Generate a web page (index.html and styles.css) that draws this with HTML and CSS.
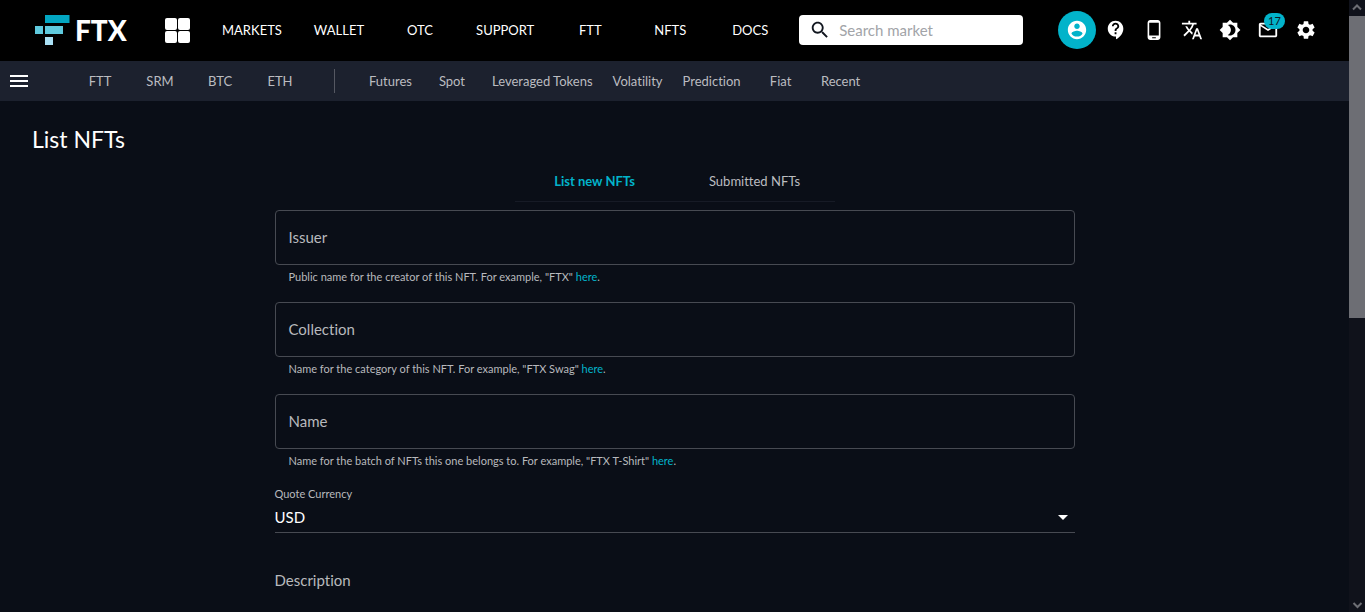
FILE: index.html
```html
<!DOCTYPE html>
<html lang="en">
<head>
<meta charset="utf-8">
<meta name="viewport" content="width=device-width, initial-scale=1">
<title>List NFTs</title>
<link rel="stylesheet" href="styles.css">
</head>
<body>
<div class="page">
  <header class="topbar">
    <a class="logo" href="#" aria-label="FTX">
      <svg class="logo-mark" width="35" height="30" viewBox="0 0 35 30" aria-hidden="true">
        <path fill="#02a6c2" d="M10 0h24.500v8H10z"/>
        <path fill="#5fcade" d="M0 11h8v8H0zM10 11h18v8H10z"/>
        <path fill="#aae1f5" d="M10 22h8v8h-8z"/>
      </svg>
      <span class="logo-text">FTX</span>
    </a>
    <button class="apps" type="button" aria-label="Apps">
      <svg width="26" height="26" viewBox="0 0 26 26" aria-hidden="true" fill="#fff">
        <rect x="0" y="1" width="12" height="12" rx="2"/><rect x="13" y="1" width="12" height="12" rx="2"/>
        <rect x="0" y="14" width="12" height="12" rx="2"/><rect x="13" y="14" width="12" height="12" rx="2"/>
      </svg>
    </button>
    <nav class="main-nav" aria-label="Main">
      <a href="#">MARKETS</a><a href="#">WALLET</a><a href="#">OTC</a><a href="#">SUPPORT</a><a href="#">FTT</a><a href="#">NFTS</a><a href="#">DOCS</a>
    </nav>
    <label class="search">
      <svg width="22" height="22" viewBox="0 0 24 24" aria-hidden="true" fill="#11161f"><path d="M15.5 14h-.79l-.28-.27C15.41 12.59 16 11.11 16 9.5 16 5.91 13.09 3 9.5 3S3 5.91 3 9.5 5.91 16 9.5 16c1.61 0 3.09-.59 4.23-1.57l.27.28v.79l5 4.99L20.49 19l-4.99-5zm-6 0C7.01 14 5 11.99 5 9.5S7.01 5 9.5 5 14 7.01 14 9.5 11.99 14 9.5 14z"/></svg>
      <input type="search" placeholder="Search market" aria-label="Search market">
    </label>
    <div class="tools">
      <button class="tool account" type="button" aria-label="Account"><svg viewBox="0 0 24 24"><path d="M12 2C6.48 2 2 6.48 2 12s4.480 10 10 10 10-4.480 10-10S17.520 2 12 2zm0 3c1.660 0 3 1.340 3 3s-1.340 3-3 3-3-1.340-3-3 1.340-3 3-3zm0 14.200c-2.500 0-4.710-1.280-6-3.220.03-1.990 4-3.080 6-3.080 1.990 0 5.970 1.090 6 3.080-1.290 1.940-3.500 3.220-6 3.220z"/></svg></button>
      <button class="tool" type="button" aria-label="Help"><svg viewBox="0 0 24 24"><path d="M11.500 2C6.810 2 3 5.810 3 10.500S6.810 19 11.500 19h.5v3c4.860-2.340 8-7 8-11.500C20 5.810 16.190 2 11.500 2zm1 14.500h-2v-2h2v2zm0-3.500h-2c0-3.250 3-3 3-5 0-1.100-.9-2-2-2s-2 .9-2 2h-2c0-2.210 1.790-4 4-4s4 1.790 4 4c0 2.500-3 2.750-3 5z"/></svg></button>
      <button class="tool" type="button" aria-label="Mobile app"><svg viewBox="0 0 24 24"><path d="M16 1H8C6.340 1 5 2.340 5 4v16c0 1.660 1.340 3 3 3h8c1.660 0 3-1.340 3-3V4c0-1.660-1.340-3-3-3zm-2 20h-4v-1h4v1zm3.250-3H6.750V4h10.500v14z"/></svg></button>
      <button class="tool" type="button" aria-label="Language"><svg viewBox="0 0 24 24"><path d="M12.870 15.070l-2.540-2.510.03-.03c1.740-1.940 2.980-4.170 3.710-6.530H17V4h-7V2H8v2H1v1.990h11.170C11.500 7.920 10.440 9.750 9 11.350 8.070 10.320 7.300 9.190 6.690 8h-2c.73 1.630 1.730 3.170 2.980 4.560l-5.090 5.020L4 19l5-5 3.110 3.110.76-2.040zM18.500 10h-2L12 22h2l1.120-3h4.750L21 22h2l-4.500-12zm-2.620 7l1.620-4.330L19.120 17h-3.240z"/></svg></button>
      <button class="tool" type="button" aria-label="Theme"><svg viewBox="0 0 24 24"><path d="M20 8.690V4h-4.690L12 .69 8.690 4H4v4.690L.69 12 4 15.310V20h4.690L12 23.310 15.310 20H20v-4.690L23.310 12 20 8.690zM12 18c-.89 0-1.740-.2-2.500-.55C11.560 16.500 13 14.420 13 12s-1.440-4.500-3.500-5.450C10.260 6.200 11.110 6 12 6c3.310 0 6 2.690 6 6s-2.690 6-6 6z"/></svg></button>
      <button class="tool" type="button" aria-label="17 messages"><svg viewBox="0 0 24 24"><path d="M20 4H4c-1.100 0-1.990.9-1.990 2L2 18c0 1.100.9 2 2 2h16c1.100 0 2-.9 2-2V6c0-1.100-.9-2-2-2zm0 14H4V8l8 5 8-5v10zm-8-7L4 6h16l-8 5z"/></svg><span class="badge">17</span></button>
      <button class="tool" type="button" aria-label="Settings"><svg viewBox="0 0 24 24"><path d="M19.140 12.940c.04-.3.060-.61.060-.94 0-.32-.02-.64-.07-.94l2.030-1.580c.18-.14.230-.41.120-.61l-1.920-3.320c-.12-.22-.37-.29-.59-.22l-2.390.96c-.5-.38-1.030-.7-1.620-.94l-.36-2.540c-.04-.24-.24-.41-.48-.41h-3.840c-.24 0-.43.17-.47.41l-.36 2.540c-.59.24-1.130.57-1.620.94l-2.390-.96c-.22-.08-.47 0-.59.22L2.740 8.870c-.12.21-.08.470.12.610l2.030 1.580c-.05.3-.09.630-.09.940s.02.640.07.940l-2.030 1.580c-.18.140-.23.410-.12.610l1.920 3.320c.12.220.37.290.59.220l2.390-.96c.5.380 1.030.7 1.620.94l.36 2.540c.05.240.24.410.48.410h3.840c.24 0 .44-.17.47-.41l.36-2.540c.59-.24 1.130-.56 1.620-.94l2.390.96c.22.080.47 0 .59-.22l1.920-3.320c.12-.22.070-.47-.12-.61l-2.010-1.580zM12 15.600c-1.980 0-3.600-1.620-3.600-3.600s1.620-3.600 3.600-3.600 3.600 1.620 3.600 3.600-1.620 3.600-3.600 3.600z"/></svg></button>
    </div>
  </header>

  <div class="subbar">
    <button class="menu" type="button" aria-label="Menu">
      <svg width="18" height="12" viewBox="0 0 18 12" aria-hidden="true"><path fill="#fff" d="M0 0h18v2H0zM0 5h18v2H0zM0 10h18v2H0z"/></svg>
    </button>
    <nav class="sub-nav" aria-label="Favourites"><a href="#">FTT</a><a href="#">SRM</a><a href="#">BTC</a><a href="#">ETH</a></nav>
    <span class="divider"></span>
    <nav class="sub-nav" aria-label="Market types"><a href="#">Futures</a><a href="#">Spot</a><a href="#">Leveraged Tokens</a><a href="#">Volatility</a><a href="#">Prediction</a><a href="#">Fiat</a><a href="#">Recent</a></nav>
  </div>

  <main class="content">
    <h1>List NFTs</h1>
    <div class="tabs" role="tablist">
      <button class="tab active" type="button" role="tab" aria-selected="true">List new NFTs</button>
      <button class="tab" type="button" role="tab" aria-selected="false">Submitted NFTs</button>
    </div>
    <form class="form">
      <div class="field">
        <div class="box"><label for="issuer">Issuer</label><input id="issuer" type="text"></div>
        <p class="help">Public name for the creator of this NFT. For example, "FTX" <a href="#">here</a>.</p>
      </div>
      <div class="field">
        <div class="box"><label for="collection">Collection</label><input id="collection" type="text"></div>
        <p class="help">Name for the category of this NFT. For example, "FTX Swag" <a href="#">here</a>.</p>
      </div>
      <div class="field">
        <div class="box"><label for="name">Name</label><input id="name" type="text"></div>
        <p class="help">Name for the batch of NFTs this one belongs to. For example, "FTX T-Shirt" <a href="#">here</a>.</p>
      </div>
      <div class="currency">
        <label for="currency">Quote Currency</label>
        <div class="select">
          <select id="currency"><option>USD</option></select>
          <svg width="24" height="24" viewBox="0 0 24 24" aria-hidden="true"><path fill="#fff" d="M7 10l5 5 5-5z"/></svg>
        </div>
      </div>
      <div class="description">
        <label for="description">Description</label>
        <textarea id="description" rows="3"></textarea>
      </div>
    </form>
  </main>
</div>
<div class="scrollbar" aria-hidden="true">
  <svg width="16" height="16" viewBox="0 0 16 16"><path fill="none" stroke="#6d6e74" stroke-width="2" d="M4 9.500l4-4 4 4"/></svg>
  <span class="thumb"></span>
  <svg width="16" height="16" viewBox="0 0 16 16"><path fill="none" stroke="#6d6e74" stroke-width="2" d="M4.500 7l4 4 4-4"/></svg>
</div>
</body>
</html>
```

FILE: styles.css
```css
* {
  box-sizing: border-box;
}

body {
  margin: 0;
  height: 100vh;
  display: grid;
  grid-template-columns: minmax(0, 1fr) 16px;
  overflow: hidden;
  background: #0a0e17;
  color: #fff;
  font-family: Lato, "Open Sans", sans-serif;
  font-size: 13px;
  font-variant-ligatures: none;
}

a {
  color: inherit;
  text-decoration: none;
}

button,
input,
select,
textarea {
  font: inherit;
  color: inherit;
  background: none;
  border: 0;
  padding: 0;
  margin: 0;
  outline: 0;
}

svg {
  display: block;
  flex: none;
}

.page {
  height: 100vh;
  overflow: hidden;
}

.topbar {
  display: flex;
  align-items: center;
  height: 61px;
  padding: 0 24px 1px 35px;
  background: #000;
}

.logo {
  display: flex;
  align-items: center;
  gap: 5px;
  width: 130px;
}

.logo-text {
  font-size: 28px;
  font-weight: 900;
  line-height: 30px;
}

.apps {
  width: 41px;
}

.main-nav,
.sub-nav {
  display: flex;
  white-space: nowrap;
}

.main-nav a {
  min-width: 80px;
  padding: 0 16px;
  text-align: center;
}

.search {
  display: flex;
  align-items: center;
  gap: 8px;
  width: 224px;
  height: 30px;
  margin-left: 9px;
  padding: 0 10px;
  border-radius: 4px;
  background: #fff;
  color: #11161f;
  font-size: 15px;
}

.search input {
  flex: 1;
  min-width: 0;
}

.search input::placeholder {
  color: #a2a4a8;
  opacity: 1;
}

.tools {
  display: flex;
  margin-left: auto;
}

.tool {
  position: relative;
  display: grid;
  place-items: center;
  width: 38px;
  height: 38px;
  border-radius: 50%;
}

.tool svg {
  width: 22px;
  height: 22px;
  fill: #fff;
}

.account {
  margin-right: 1px;
  background: #02b3ca;
}

.badge {
  position: absolute;
  top: 2px;
  right: 2px;
  width: 21px;
  height: 16px;
  border-radius: 8px;
  background: #02b3ca;
  color: #10151f;
  font-size: 11px;
  line-height: 16px;
  text-align: center;
}

.subbar {
  display: flex;
  align-items: center;
  height: 40px;
  padding-left: 10px;
  background: #1c212e;
  color: #bbbcc0;
}

.menu {
  width: 60px;
}

.sub-nav a {
  min-width: 60px;
  padding: 0 10px;
  text-align: center;
}

.divider {
  width: 1px;
  height: 24px;
  margin: 0 24px;
  background: #555862;
}

h1 {
  margin: 0;
  padding: 22px 32px 7px;
  font-size: 23px;
  line-height: 32px;
  font-weight: 400;
}

.tabs {
  display: flex;
  width: 320px;
  margin: 0 auto 8px;
  border-bottom: 1px solid #171b26;
}

.tab {
  flex: 1;
  height: 39px;
  padding-bottom: 2px;
  color: #bbbcc0;
}

.active {
  color: #02b3ca;
  font-weight: 700;
}

.form {
  max-width: 800px;
  margin: 0 auto;
  color: #b8b9bd;
}

.field {
  margin-bottom: 16px;
}

.box {
  display: grid;
  align-items: center;
  height: 55px;
  border: 1px solid #474a52;
  border-radius: 4px;
  font-size: 15px;
}

.box label,
.box input {
  grid-area: 1 / 1;
  padding: 0 13px 2px;
}

.box input {
  height: 100%;
}

.help {
  margin: 3px 14px 0;
  font-size: 11px;
  line-height: 18px;
}

.help a {
  color: #02b3ca;
}

.currency {
  font-size: 11px;
  line-height: 16px;
}

.select {
  display: grid;
  align-items: center;
  border-bottom: 1px solid #474a52;
  color: #fff;
  font-size: 15px;
}

.select select,
.select svg {
  grid-area: 1 / 1;
}

.select select {
  width: 100%;
  height: 30px;
  appearance: none;
}

.select svg {
  justify-self: end;
  pointer-events: none;
}

.description {
  display: grid;
  margin-top: 37px;
  font-size: 15px;
  line-height: 20px;
}

.description textarea {
  border-bottom: 1px solid #474a52;
  resize: none;
}

.scrollbar {
  display: grid;
  grid-template-rows: 16px 1fr 16px;
  height: 100vh;
  background: #10121b;
}

.thumb {
  height: 52%;
  background: #6d6e74;
}
```
